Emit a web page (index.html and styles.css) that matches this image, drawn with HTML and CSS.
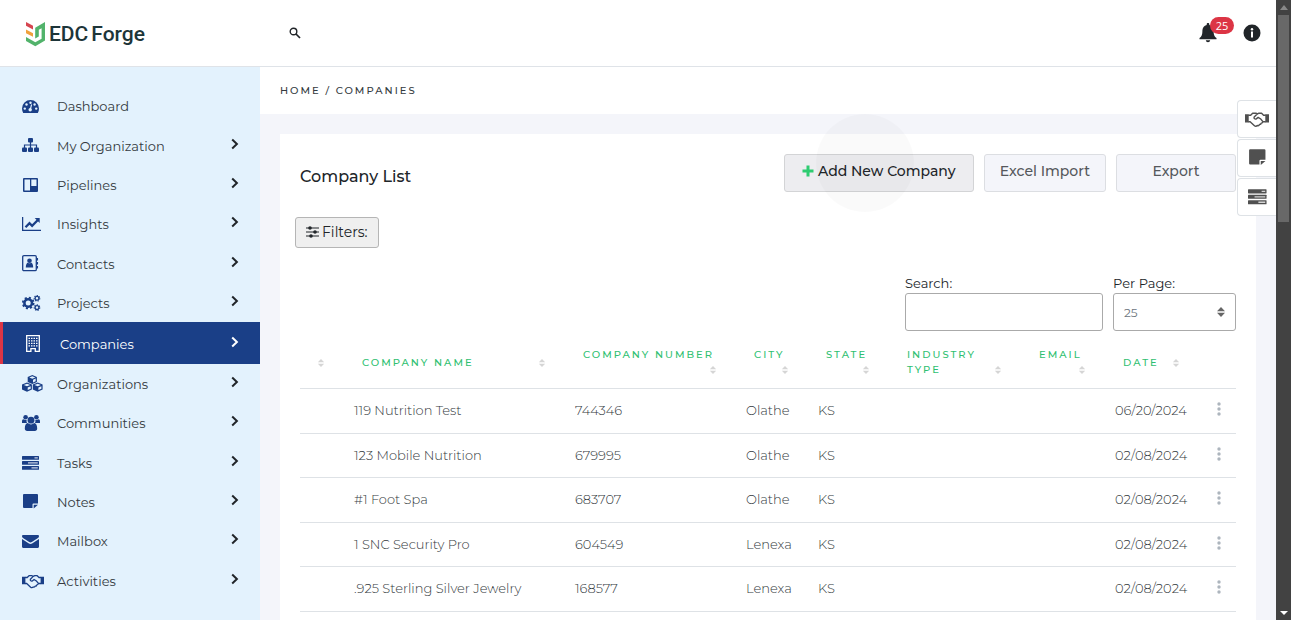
FILE: index.html
```html
<!DOCTYPE html>
<html lang="en">

<head>
    <meta charset="UTF-8">
    <meta name="viewport" content="width=device-width, initial-scale=1.0">
    <title>EDC Forge - Companies</title>

    <link rel="stylesheet" href="styles.css">
</head>

<body>
    <!-- icon sprite -->
    <svg class="sprite" aria-hidden="true">
        <symbol id="i-dashboard" viewBox="0 0 22 18">
            <path fill="currentColor" fill-rule="evenodd" d="M8.5 3A8.5 8.5 0 0 0 0 11.500c0 1.600.400 3.100 1.200 4.400h14.600a8.500 8.500 0 0 0 1.200-4.400A8.500 8.500 0 0 0 8.500 3z" />
            <g fill="#e3f2fd"><circle cx="2.800" cy="11.600" r="1.200" /><circle cx="4.500" cy="7.500" r="1.200" /><circle cx="8.500" cy="5.700" r="1.200" /><circle cx="12.600" cy="7.500" r="1.200" /><circle cx="14.200" cy="11.600" r="1.200" /><circle cx="8.200" cy="12.800" r="1.700" /></g>
            <path stroke="#e3f2fd" stroke-width="1.100" d="M8.300 12.500l1.300-5" />
        </symbol>
        <symbol id="i-org" viewBox="0 0 22 18">
            <g fill="currentColor"><rect x="6" y="1" width="5" height="4.500" rx="1" /><rect x="0" y="10.500" width="5" height="4.500" rx="1" /><rect x="6" y="10.500" width="5" height="4.500" rx="1" /><rect x="12" y="10.500" width="5" height="4.500" rx="1" /></g>
            <path fill="none" stroke="currentColor" stroke-width="1.200" d="M8.500 5v6M2.500 11V8h12v3" />
        </symbol>
        <symbol id="i-board" viewBox="0 0 22 18">
            <path fill="currentColor" fill-rule="evenodd" d="M2 2h13a1 1 0 0 1 1 1v12a1 1 0 0 1-1 1H2a1 1 0 0 1-1-1V3a1 1 0 0 1 1-1zm.500 1.500v11H8v-11zm6.800 0V10h5.200V3.500z" />
        </symbol>
        <symbol id="i-chart" viewBox="0 0 22 18">
            <path fill="none" stroke="currentColor" stroke-width="1.300" d="M.600 2v13.400H19" />
            <path fill="none" stroke="currentColor" stroke-width="2.300" d="M3.500 12.200l4-4 2.600 2.600 6-6" />
            <path fill="currentColor" d="M12.700 3h5v5z" />
        </symbol>
        <symbol id="i-contacts" viewBox="0 0 22 18">
            <rect x=".700" y=".700" width="13.600" height="15" rx="1.200" fill="none" stroke="currentColor" stroke-width="1.300" />
            <circle cx="7.500" cy="5.800" r="2.300" fill="currentColor" />
            <path fill="currentColor" d="M3.800 12.500c0-3 1-4.700 2.200-4.700.900.700 2.100.700 3 0 1.200 0 2.200 1.700 2.200 4.700z" />
            <path stroke="currentColor" stroke-width="1.500" d="M15.300 3v2.500M15.300 7v2.500M15.300 11v2.500" />
        </symbol>
        <symbol id="i-gears" viewBox="0 0 22 18">
            <g fill="none" stroke="currentColor">
                <circle cx="6.200" cy="9" r="3.800" stroke-width="2.600" />
                <circle cx="6.200" cy="9" r="5.400" stroke-width="1.800" stroke-dasharray="2.120 2.120" />
                <circle cx="15" cy="4.300" r="1.900" stroke-width="1.300" />
                <circle cx="15" cy="4.300" r="2.800" stroke-width="1.100" stroke-dasharray="1.250 1.260" />
                <circle cx="15" cy="13.600" r="1.900" stroke-width="1.300" />
                <circle cx="15" cy="13.600" r="2.800" stroke-width="1.100" stroke-dasharray="1.250 1.260" />
            </g>
        </symbol>
        <symbol id="i-building" viewBox="0 0 22 18">
            <path fill="none" stroke="currentColor" stroke-width="1.300" d="M1.700.700h12.600v15.600h-4v-2.600H5.900v2.600H1.700z" />
            <path stroke="currentColor" stroke-width="1.400" stroke-dasharray="1.500 1" d="M3.500 3.400h9.200M3.500 5.900h9.200M3.500 8.400h9.200M3.500 10.900h9.200" />
        </symbol>
        <symbol id="i-cubes" viewBox="0 0 22 18">
            <g fill="currentColor"><path d="M10.300 0l4.600 1.900v5L10.300 9 5.700 6.900v-5z" /><path d="M5 7.500l4.900 2v5L5 16.700 0 14.500v-5z" /><path d="M15.700 7.500l4.900 2v5l-4.900 2.200-4.900-2.200v-5z" /></g>
            <g fill="#e3f2fd"><path d="M10.300 1.200l3 1.200-3 1.300-3-1.300zM5 8.700l3.200 1.300L5 11.300 1.800 10zM15.700 8.700l3.200 1.300-3.200 1.300-3.200-1.300z" /><path d="M11 4.800l2.700-1.200v2.600L11 7.400zM5.700 12.400l3-1.200v2.600l-3 1.300zM16.400 12.400l3-1.200v2.600l-3 1.300z" /></g>
        </symbol>
        <symbol id="i-users" viewBox="0 0 22 18">
            <g fill="currentColor"><circle cx="3.600" cy="3.300" r="2.300" /><circle cx="14.400" cy="3.300" r="2.300" /><path d="M0 9V7.500C0 6 .600 5.300 1.500 5.300c1.200.900 2.300.900 3.200.600C4.300 7.500 4.700 8.400 5.200 9zM18 9V7.500c0-1.500-.600-2.200-1.500-2.200-1.200.900-2.300.900-3.200.600.400 1.600 0 2.500-.500 3.100z" /><circle cx="9" cy="6.200" r="3.400" /><path d="M2.800 14.500c0-3 1.200-5.400 3-5.400 2 1.700 4.400 1.700 6.400 0 1.800 0 3 2.400 3 5.400 0 1.600-.900 2.500-2.400 2.500H5.200c-1.500 0-2.400-.900-2.400-2.500z" /></g>
        </symbol>
        <symbol id="i-tasks" viewBox="0 0 22 18">
            <g fill="currentColor"><rect x="0" y="2" width="17" height="3.700" rx=".500" /><rect x="0" y="7" width="17" height="3.700" rx=".500" /><rect x="0" y="12" width="17" height="3.700" rx=".500" /></g>
            <path stroke="#fff" stroke-opacity=".75" stroke-width="1.300" d="M12.500 3.850h3.300M6 8.850h9.800M9.500 13.850h6.300" />
        </symbol>
        <symbol id="i-note" viewBox="0 0 22 18">
            <path fill="currentColor" d="M2 1h13a1 1 0 0 1 1 1v8.500h-4.500a1 1 0 0 0-1 1V15H2a1 1 0 0 1-1-1V2a1 1 0 0 1 1-1zm9.700 10.700H16L11.700 15.500z" />
        </symbol>
        <symbol id="i-mail" viewBox="0 0 22 18">
            <path fill="currentColor" d="M1.300 3h14.400c.800 0 1.300.500 1.300 1.300 0 .700-.400 1.300-1 1.700L9.800 10c-.900.600-1.700.600-2.600 0L1 6C.400 5.600 0 5 0 4.300 0 3.500.500 3 1.300 3zM0 6.900l6.500 4.300c1.300.900 2.700.900 4 0L17 6.900v7.600c0 .900-.600 1.500-1.500 1.500h-14C.600 16 0 15.400 0 14.500z" />
        </symbol>
        <symbol id="i-handshake" viewBox="0 0 22 18">
            <path fill="currentColor" d="M0 4.700h3.400v7.600H0zM18.600 4.700H22v7.600h-3.400z" />
            <path fill="none" stroke="currentColor" stroke-width="1.300" stroke-linejoin="round" stroke-linecap="round" d="M3.400 5.500h1.800L7 3.700h3l1.200.700 1.600-.700h2.400l1.800 1.800h1.600M3.400 11.500h1.300l3.700 3.400c1 .900 2 .900 2.900.100 1 .300 1.700-.100 2-.900 1 0 1.500-.500 1.600-1.300.900-.100 1.400-.600 1.500-1.300h2.200M11.200 4.400L8.400 7.200c-.600 1.300.900 2.500 2.200 1.500l1.500-1.200c1.600.700 3.200 2.200 4.300 3.900" />
        </symbol>
        <symbol id="i-chevron" viewBox="0 0 8 12">
            <path fill="none" stroke="currentColor" stroke-width="2" d="M1.200 1.500L5.900 6 1.200 10.500" />
        </symbol>
        <symbol id="i-sort" viewBox="0 0 8 10">
            <path fill="currentColor" d="M4 0l4 4.200H0zM4 10L0 5.800h8z" />
        </symbol>
        <symbol id="i-dots" viewBox="0 0 4 14">
            <g fill="currentColor"><circle cx="2" cy="2" r="1.700" /><circle cx="2" cy="7" r="1.700" /><circle cx="2" cy="12" r="1.700" /></g>
        </symbol>
    </svg>

    <div class="page">
        <header class="topbar">
            <a class="logo" href="#">
                <svg width="22" height="26" viewBox="0 0 22 26" aria-hidden="true">
                    <path fill="#d64550" d="M1 1l7 3.800v3.600L1 4.700z" />
                    <path fill="#f0a13c" d="M1 8.500l7 3.800v3.500L1 12.200z" />
                    <path fill="#52b36b" d="M1 16l9.300 5.300 6.300-3.600V7.200l-2.800 1.600v6.700l-3.600 2V6.700L20 1v18.400l-9.700 5.800L1 19.900z" />
                </svg>
                <span class="logo-text"><span>EDC</span><span>Forge</span></span>
            </a>
            <button class="icon-btn search-btn" type="button" aria-label="Search">
                <svg width="12" height="12" viewBox="0 0 12 12"><circle cx="4.500" cy="4.500" r="3.300" fill="none" stroke="currentColor" stroke-width="1.400" /><path stroke="currentColor" stroke-width="1.700" d="M7 7l4 4" /></svg>
            </button>
            <div class="topbar-right">
                <button class="icon-btn bell" type="button" aria-label="Notifications">
                    <svg width="18" height="20" viewBox="0 0 18 20"><path fill="currentColor" d="M9 0c.800 0 1.300.500 1.300 1.200v.700c2.700.600 4.300 2.800 4.300 5.600 0 4.500 1 6.200 2.900 7.500v1.200H.500V15c1.900-1.300 2.900-3 2.900-7.500 0-2.800 1.600-5 4.300-5.600v-.700C7.700.500 8.200 0 9 0zM6.800 17.300h4.400C11 18.500 10.200 19.200 9 19.200s-2-.700-2.200-1.900z" /></svg>
                    <span class="badge">25</span>
                </button>
                <button class="icon-btn" type="button" aria-label="Information">
                    <svg width="18" height="18" viewBox="0 0 18 18"><circle cx="9" cy="9" r="8.500" fill="currentColor" /><circle cx="9" cy="5.200" r="1.200" fill="#fff" /><path fill="#fff" d="M8 7.500h2v6H8z" /></svg>
                </button>
            </div>
        </header>

        <div class="body">
            <nav class="sidebar">
                <ul>
                    <li><a href="#"><svg class="icon"><use href="#i-dashboard" /></svg><span>Dashboard</span></a></li>
                    <li><a href="#"><svg class="icon"><use href="#i-org" /></svg><span>My Organization</span><svg class="chevron"><use href="#i-chevron" /></svg></a></li>
                    <li><a href="#"><svg class="icon"><use href="#i-board" /></svg><span>Pipelines</span><svg class="chevron"><use href="#i-chevron" /></svg></a></li>
                    <li><a href="#"><svg class="icon"><use href="#i-chart" /></svg><span>Insights</span><svg class="chevron"><use href="#i-chevron" /></svg></a></li>
                    <li><a href="#"><svg class="icon"><use href="#i-contacts" /></svg><span>Contacts</span><svg class="chevron"><use href="#i-chevron" /></svg></a></li>
                    <li><a href="#"><svg class="icon"><use href="#i-gears" /></svg><span>Projects</span><svg class="chevron"><use href="#i-chevron" /></svg></a></li>
                    <li class="active"><a href="#"><svg class="icon"><use href="#i-building" /></svg><span>Companies</span><svg class="chevron"><use href="#i-chevron" /></svg></a></li>
                    <li><a href="#"><svg class="icon"><use href="#i-cubes" /></svg><span>Organizations</span><svg class="chevron"><use href="#i-chevron" /></svg></a></li>
                    <li><a href="#"><svg class="icon"><use href="#i-users" /></svg><span>Communities</span><svg class="chevron"><use href="#i-chevron" /></svg></a></li>
                    <li><a href="#"><svg class="icon"><use href="#i-tasks" /></svg><span>Tasks</span><svg class="chevron"><use href="#i-chevron" /></svg></a></li>
                    <li><a href="#"><svg class="icon"><use href="#i-note" /></svg><span>Notes</span><svg class="chevron"><use href="#i-chevron" /></svg></a></li>
                    <li><a href="#"><svg class="icon"><use href="#i-mail" /></svg><span>Mailbox</span><svg class="chevron"><use href="#i-chevron" /></svg></a></li>
                    <li><a href="#"><svg class="icon"><use href="#i-handshake" /></svg><span>Activities</span><svg class="chevron"><use href="#i-chevron" /></svg></a></li>
                </ul>
            </nav>

            <main class="content">
                <div class="breadcrumb"><a href="#">Home</a> / <a href="#">Companies</a></div>

                <section class="card">
                    <div class="card-head">
                        <h1>Company List</h1>
                        <div class="actions">
                            <button class="btn btn-add" type="button">
                                <svg width="12" height="12" viewBox="0 0 12 12"><path stroke="#2ecc71" stroke-width="3" d="M6 .500v11M.500 6h11" /></svg>
                                Add New Company
                            </button>
                            <button class="btn" type="button">Excel Import</button>
                            <button class="btn" type="button">Export</button>
                        </div>
                    </div>

                    <button class="btn-filter" type="button">
                        <svg width="13" height="12" viewBox="0 0 13 12"><path stroke="currentColor" stroke-width="1.200" d="M0 2h13M0 6h13M0 10h13" /><g fill="currentColor"><circle cx="4" cy="2" r="1.800" /><circle cx="9" cy="6" r="1.800" /><circle cx="5" cy="10" r="1.800" /></g></svg>
                        Filters:
                    </button>

                    <div class="controls">
                        <div class="field field-search">
                            <label for="search">Search:</label>
                            <input type="text" id="search">
                        </div>
                        <div class="field field-page">
                            <label for="perPage">Per Page:</label>
                            <select id="perPage">
                                <option>10</option>
                                <option selected>25</option>
                                <option>50</option>
                            </select>
                            <svg class="select-arrows"><use href="#i-sort" /></svg>
                        </div>
                    </div>

                    <table>
                        <colgroup>
                            <col class="c-check"><col><col class="c-number"><col class="c-city"><col class="c-state">
                            <col class="c-industry"><col class="c-email"><col class="c-date"><col class="c-menu">
                        </colgroup>
                        <thead>
                            <tr>
                                <th><button type="button" aria-label="Sort"><svg class="sort"><use href="#i-sort" /></svg></button></th>
                                <th><button type="button">Company Name<svg class="sort"><use href="#i-sort" /></svg></button></th>
                                <th><button type="button">Company Number<svg class="sort"><use href="#i-sort" /></svg></button></th>
                                <th><button type="button">City<svg class="sort"><use href="#i-sort" /></svg></button></th>
                                <th><button type="button">State<svg class="sort"><use href="#i-sort" /></svg></button></th>
                                <th><button type="button">Industry Type<svg class="sort"><use href="#i-sort" /></svg></button></th>
                                <th><button type="button">Email<svg class="sort"><use href="#i-sort" /></svg></button></th>
                                <th><button type="button">Date<svg class="sort"><use href="#i-sort" /></svg></button></th>
                                <th></th>
                            </tr>
                        </thead>
                        <tbody>
                            <tr><td></td><td>119 Nutrition Test</td><td>744346</td><td>Olathe</td><td>KS</td><td></td><td></td><td>06/20/2024</td><td><button class="row-menu" type="button" aria-label="Row menu"><svg><use href="#i-dots" /></svg></button></td></tr>
                            <tr><td></td><td>123 Mobile Nutrition</td><td>679995</td><td>Olathe</td><td>KS</td><td></td><td></td><td>02/08/2024</td><td><button class="row-menu" type="button" aria-label="Row menu"><svg><use href="#i-dots" /></svg></button></td></tr>
                            <tr><td></td><td>#1 Foot Spa</td><td>683707</td><td>Olathe</td><td>KS</td><td></td><td></td><td>02/08/2024</td><td><button class="row-menu" type="button" aria-label="Row menu"><svg><use href="#i-dots" /></svg></button></td></tr>
                            <tr><td></td><td>1 SNC Security Pro</td><td>604549</td><td>Lenexa</td><td>KS</td><td></td><td></td><td>02/08/2024</td><td><button class="row-menu" type="button" aria-label="Row menu"><svg><use href="#i-dots" /></svg></button></td></tr>
                            <tr><td></td><td>.925 Sterling Silver Jewelry</td><td>168577</td><td>Lenexa</td><td>KS</td><td></td><td></td><td>02/08/2024</td><td><button class="row-menu" type="button" aria-label="Row menu"><svg><use href="#i-dots" /></svg></button></td></tr>
                        </tbody>
                    </table>
                </section>
            </main>
        </div>

        <aside class="quick-tabs">
            <button type="button" aria-label="Activities"><svg><use href="#i-handshake" /></svg></button>
            <button type="button" aria-label="Notes"><svg><use href="#i-note" /></svg></button>
            <button type="button" aria-label="Tasks"><svg><use href="#i-tasks" /></svg></button>
        </aside>
    </div>

    <div class="scrollbar" aria-hidden="true">
        <span class="arrow-up"></span>
        <span class="thumb"></span>
        <span class="arrow-down"></span>
    </div>
</body>

</html>
```
FILE: styles.css
```css
* {
    box-sizing: border-box;
}

body {
    display: flex;
    height: 100vh;
    margin: 0;
    overflow: hidden;
    font-family: Montserrat, Inter, sans-serif;
    font-size: 13px;
    color: #212529;
    background-color: #fff;
}

button,
input,
select {
    font-family: inherit;
}

button {
    cursor: pointer;
}

a {
    color: inherit;
    text-decoration: none;
}

svg {
    flex: none;
}

.sprite {
    position: absolute;
    width: 0;
    height: 0;
}

.page {
    position: relative;
    display: flex;
    flex-direction: column;
    flex: 1;
    min-width: 0;
}

/* top bar */
.topbar {
    display: flex;
    align-items: center;
    flex: none;
    height: 67px;
    padding: 0 15px 0 25px;
    border-bottom: 1px solid #dfe3e8;
}

.logo {
    display: flex;
    align-items: center;
    gap: 2px;
    width: 264px;
    padding-top: 2px;
}

.logo-text {
    display: flex;
    gap: 3px;
    font-family: Roboto, sans-serif;
    font-size: 21px;
    font-weight: 500;
    line-height: 26px;
    color: #1d3539;
}

.icon-btn {
    position: relative;
    display: flex;
    padding: 0;
    border: 0;
    background: none;
    color: #212529;
}

.topbar-right {
    display: flex;
    align-items: center;
    gap: 26px;
    margin-left: auto;
}

.badge {
    position: absolute;
    top: -6px;
    left: 11px;
    width: 24px;
    border-radius: 9px;
    background-color: #dc3545;
    color: #fff;
    font-family: "Open Sans", sans-serif;
    font-size: 11px;
    line-height: 17px;
    text-align: center;
}

/* side menu */
.body {
    display: flex;
    flex: 1;
    min-height: 0;
}

.sidebar {
    flex: none;
    width: 260px;
    background-color: #e3f2fd;
}

.sidebar ul {
    display: flex;
    flex-direction: column;
    height: 100%;
    margin: 0;
    padding: 19px 0 20px;
    list-style: none;
}

.sidebar li {
    flex: 1 0 30px;
}

.sidebar a {
    display: flex;
    align-items: center;
    height: 100%;
    padding: 1px 21px 0 22px;
    color: #343a40;
}

.sidebar .icon {
    width: 22px;
    height: 18px;
    margin-right: 13px;
    color: #1a3f87;
}

.sidebar .chevron {
    width: 8px;
    height: 12px;
    margin: 0 0 4px auto;
    color: #212529;
}

.sidebar .active {
    flex-basis: 32px;
    border-left: 3px solid #dc3545;
    background-color: #1a3f87;
}

.sidebar .active a,
.sidebar .active .icon,
.sidebar .active .chevron {
    color: #fff;
}

/* content */
.content {
    flex: 1;
    min-width: 0;
    overflow: hidden;
    background-color: #f4f5fa;
}

.breadcrumb {
    padding: 1px 20px 0;
    background-color: #fff;
    color: #343a40;
    font-size: 10px;
    font-weight: 500;
    line-height: 46px;
    letter-spacing: 2px;
    text-transform: uppercase;
}

.card {
    min-height: 100%;
    margin: 20px 20px 0;
    padding: 20px;
    background-color: #fff;
}

.card-head {
    display: flex;
    align-items: center;
    justify-content: space-between;
}

h1 {
    margin: 0;
    padding-top: 8px;
    font-size: 16px;
    font-weight: 500;
    line-height: 24px;
}

.actions {
    display: flex;
    gap: 10px;
}

.btn {
    min-width: 120px;
    height: 38px;
    padding: 0 15px 4px;
    border: 1px solid #dcdee2;
    border-radius: 3px;
    background-color: #f4f5fa;
    color: #55585c;
    font-size: 14px;
    font-weight: 500;
}

/* hovered, with the click ripple spreading over it */
.btn-add {
    position: relative;
    min-width: 190px;
    border-color: #d3d4d6;
    background-color: #ededf0;
    color: #212529;
}

.btn-add::after {
    content: "";
    position: absolute;
    top: -41px;
    left: 31px;
    width: 98px;
    height: 98px;
    border-radius: 50%;
    background-color: rgba(0, 0, 0, 0.02);
}

.btn-add svg {
    vertical-align: -1px;
}

.btn-filter {
    display: flex;
    align-items: center;
    gap: 3px;
    height: 31px;
    margin: 25px 0 25px -5px;
    padding: 0 10px 2px;
    border: 1px solid #b5b5b5;
    border-radius: 3px;
    background-color: #efefef;
    color: #212529;
    font-size: 14px;
}

.controls {
    display: flex;
    justify-content: flex-end;
    gap: 10px;
}

.field {
    position: relative;
    display: flex;
    flex-direction: column;
    line-height: 20px;
}

.field-search {
    width: 198px;
}

.field-page {
    width: 123px;
}

.field input,
.field select {
    width: 100%;
    height: 38px;
    padding: 0 10px;
    border: 1px solid #aaa;
    border-radius: 3px;
    background-color: #fff;
    color: #6c757d;
    font-size: 12px;
    appearance: none;
}

.select-arrows {
    position: absolute;
    right: 11px;
    bottom: 14px;
    width: 8px;
    height: 10px;
    color: #666;
    pointer-events: none;
}

/* company table */
table {
    width: 100%;
    margin-top: 4px;
    border-collapse: collapse;
    table-layout: fixed;
}

.c-check { width: 42px; }
.c-number { width: 171px; }
.c-city { width: 72px; }
.c-state { width: 81px; }
.c-industry { width: 132px; }
.c-email { width: 84px; }
.c-date { width: 94px; }
.c-menu { width: 39px; }

th {
    padding: 12px 17px 11px 20px;
    border-bottom: 1px solid #dee2e6;
}

th:first-child {
    padding-left: 12px;
}

th button {
    display: block;
    width: 100%;
    padding: 0;
    border: 0;
    background: none;
    color: #2fbf71;
    font-size: 10px;
    font-weight: 500;
    line-height: 15px;
    letter-spacing: 2px;
    text-align: left;
    text-transform: uppercase;
}

.sort {
    float: right;
    width: 8px;
    height: 8px;
    margin: 4px 0 3px;
    color: #d5d5d5;
}

td {
    padding: 12px 0 12px 12px;
    border-bottom: 1px solid #dee2e6;
    color: #343a40;
    font-weight: 300;
    line-height: 1.5;
    white-space: nowrap;
}

.row-menu {
    display: flex;
    margin: 0 0 3px 6px;
    padding: 0 2px;
    border: 0;
    background: none;
    color: #adb5bd;
}

.row-menu svg {
    width: 4px;
    height: 14px;
}

/* tabs pinned to the right edge */
.quick-tabs {
    position: absolute;
    top: 100px;
    right: 0;
    display: flex;
    flex-direction: column;
    gap: 1px;
}

.quick-tabs button {
    display: flex;
    align-items: center;
    justify-content: center;
    width: 39px;
    height: 38px;
    padding: 0;
    border: 1px solid #dee2e6;
    border-right: 0;
    border-radius: 4px 0 0 4px;
    background-color: #fff;
    color: #505050;
}

.quick-tabs svg {
    width: 24px;
    height: 20px;
}

.quick-tabs button:not(:first-child) svg {
    margin-left: 5px;
}

/* scrollbar */
.scrollbar {
    display: flex;
    flex-direction: column;
    align-items: center;
    flex: none;
    width: 15px;
    padding: 5px 0;
    background-color: #424242;
}

.arrow-up,
.arrow-down {
    border: 4px solid transparent;
}

.arrow-up {
    border-top: 0;
    border-bottom: 5px solid #888;
}

.thumb {
    width: 11px;
    height: 34%;
    margin: 5px 0 auto;
    background-color: #686868;
}

.arrow-down {
    border-top: 4px solid #fff;
    border-bottom: 0;
}
```
